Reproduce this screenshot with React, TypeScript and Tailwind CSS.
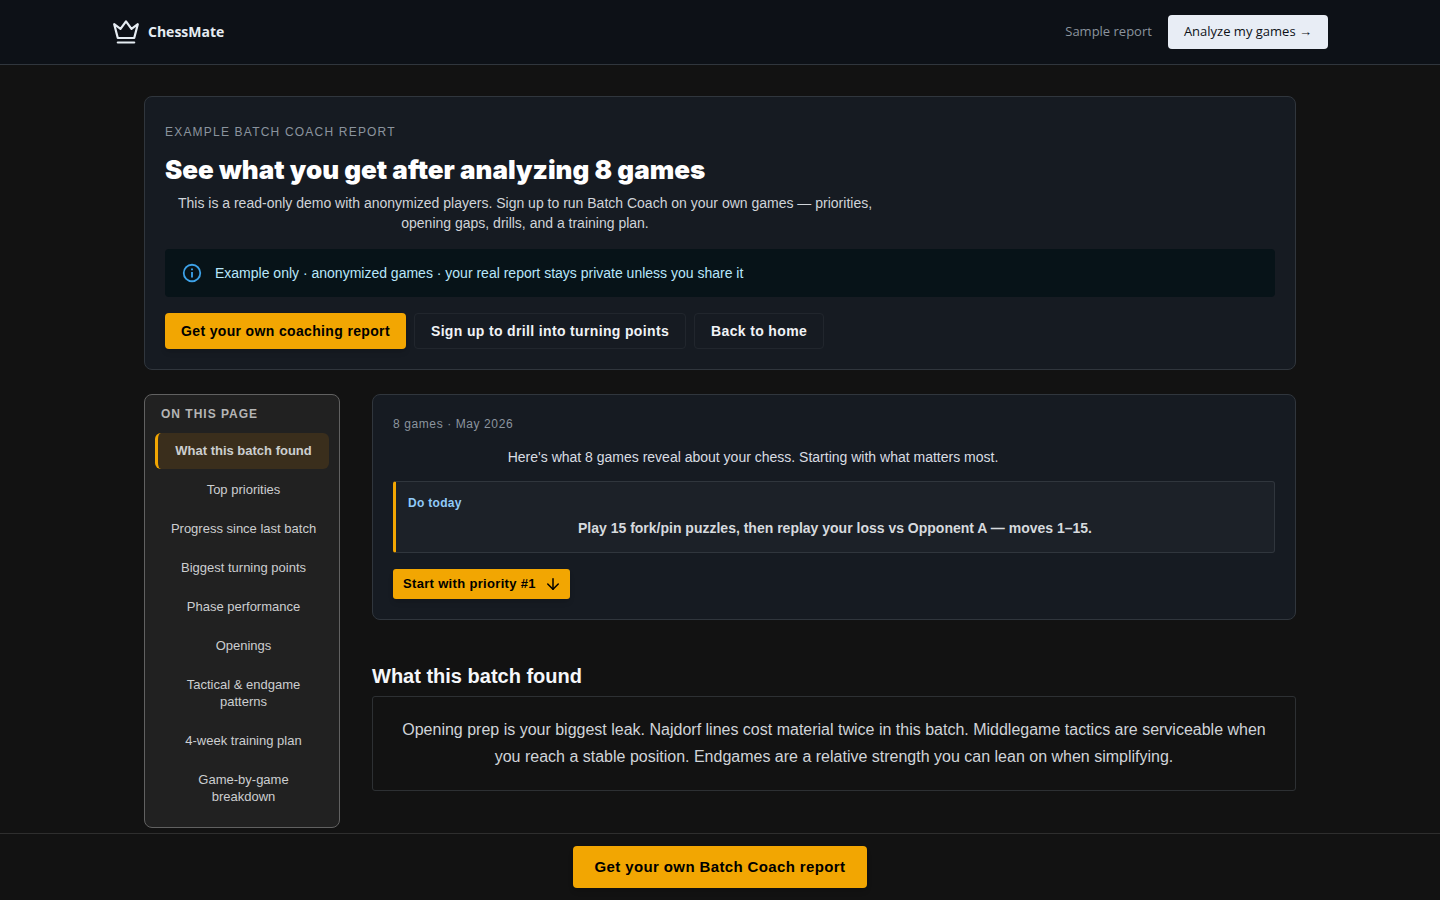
import { ArrowDown } from "lucide-react";

const sections = [
  { id: "found", label: "What this batch found" },
  { id: "priorities", label: "Top priorities" },
  { id: "progress", label: "Progress since last batch" },
  { id: "turning-points", label: "Biggest turning points" },
  { id: "phases", label: "Phase performance" },
  { id: "openings", label: "Openings" },
  { id: "patterns", label: "Tactical & endgame patterns" },
  { id: "plan", label: "4-week training plan" },
  { id: "games", label: "Game-by-game breakdown" },
];

function CrownLogo() {
  return (
    <svg
      className="w-7 h-7"
      viewBox="0 0 28 28"
      fill="none"
      stroke="currentColor"
      strokeWidth={2.2}
      strokeLinecap="round"
      strokeLinejoin="round"
      aria-hidden="true"
    >
      <path d="M2.2 6.2L5.8 20h16.400L25.800 6.200l-6.300 4.600L14 3.400l-5.500 7.400z" />
      <path d="M5.8 24.500h16.400" />
    </svg>
  );
}

function InfoIcon() {
  return (
    <svg className="w-[22px] h-[22px] text-[#3da2e8]" viewBox="0 0 24 24" fill="currentColor" aria-hidden="true">
      <path d="M11 9h2V7h-2m1 13c-4.410 0-8-3.590-8-8s3.590-8 8-8 8 3.590 8 8-3.590 8-8 8m0-18A10 10 0 0 0 2 12a10 10 0 0 0 10 10 10 10 0 0 0 10-10A10 10 0 0 0 12 2m-1 15h2v-6h-2v6Z" />
    </svg>
  );
}

function Header() {
  return (
    <header className="bg-[#0d1117] border-b border-[#30363d] font-['Open_Sans','Noto_Sans',sans-serif]">
      <div className="max-w-7xl mx-auto h-16 px-8 flex items-center justify-between">
        <a href="#home" className="flex items-center gap-2 text-[#e6edf3]">
          <CrownLogo />
          <span className="text-sm font-bold">ChessMate</span>
        </a>
        <nav className="flex items-center gap-4">
          <a href="#sample" className="text-[13px] text-[#8b949e]">
            Sample report
          </a>
          <a
            href="#analyze"
            className="h-[34px] px-4 flex items-center rounded bg-[#e8edf5] text-[13px] font-medium text-[#0d1117]"
          >
            Analyze my games →
          </a>
        </nav>
      </div>
    </header>
  );
}

function Hero() {
  return (
    <section className="bg-[#161b22] border border-[#30363d] rounded-lg p-5">
      <p className="text-xs leading-[30px] tracking-widest uppercase text-[#8b949e]">
        Example Batch Coach report
      </p>
      <h1 className="mt-2 text-[26px] leading-[30px] font-black text-white font-['Inter',sans-serif]">
        See what you get after analyzing 8 games
      </h1>
      <p className="mt-2 max-w-[720px] text-sm text-center text-[#d0d4d9]">
        This is a read-only demo with anonymized players. Sign up to run Batch Coach on your own games — priorities,
        opening gaps, drills, and a training plan.
      </p>
      <div
        role="note"
        className="mt-4 min-h-12 px-4 flex items-center gap-3 rounded bg-[#071318] text-sm text-[#b8e7fb]"
      >
        <InfoIcon />
        Example only · anonymized games · your real report stays private unless you share it
      </div>
      <div className="mt-4 flex flex-wrap gap-2 text-sm font-bold tracking-wide">
        <button className="h-9 px-4 rounded bg-[#f2a602] text-black shadow-md">Get your own coaching report</button>
        <button className="h-9 px-4 rounded border border-[#21262d] text-[#f0f3f6]">
          Sign up to drill into turning points
        </button>
        <button className="h-9 px-4 rounded border border-[#21262d] text-[#f0f3f6]">Back to home</button>
      </div>
    </section>
  );
}

function PageNav() {
  return (
    <nav
      aria-label="On this page"
      className="w-[196px] shrink-0 px-2.5 pt-[11px] pb-3 rounded-lg border border-[#616161] bg-[#212121]"
    >
      <h2 className="px-1.5 text-xs leading-4 font-bold tracking-[1px] uppercase text-[#b5b5b5]">On this page</h2>
      <ul className="mt-[11px] flex flex-col gap-[3px] text-[13px] leading-[17px] text-center text-[#ccced0]">
        {sections.map((s, i) => (
          <li key={s.id}>
            <a
              href={`#${s.id}`}
              className={
                i === 0
                  ? "block px-2 pt-[9px] pb-[10px] rounded-md border-l-3 border-[#f2a602] bg-[#3a2e1c] font-bold"
                  : "block px-2 pt-[9px] pb-[10px] border-l-3 border-transparent font-medium"
              }
            >
              {s.label}
            </a>
          </li>
        ))}
      </ul>
    </nav>
  );
}

function BatchSummary() {
  return (
    <section className="bg-[#161b22] border border-[#30363d] rounded-lg p-5">
      <p className="text-xs leading-[18px] tracking-wider text-[#8b949e]">8 games · May 2026</p>
      <p className="mt-3.5 max-w-[720px] text-sm text-center text-[#d9dde2]">
        Here's what 8 games reveal about your chess. Starting with what matters most.
      </p>
      <div className="mt-3.5 p-3 rounded-[3px] border border-l-3 border-[#30363d] border-l-[#f2a602] bg-[#1c2128]">
        <p className="text-xs leading-[18px] font-bold tracking-wide text-[#90caf9]">Do today</p>
        <p className="mt-1 text-sm leading-6 font-bold text-center text-[#d6dade]">
          Play 15 fork/pin puzzles, then replay your loss vs Opponent A — moves 1–15.
        </p>
      </div>
      <button className="mt-4 h-[30px] pl-2.5 pr-2 flex items-center gap-2 rounded-[3px] bg-[#f2a602] text-[13px] font-bold tracking-wide text-black shadow-md">
        Start with priority #1
        <ArrowDown className="w-[18px] h-[18px]" />
      </button>
    </section>
  );
}

export default function App() {
  return (
    <div className="min-h-screen bg-[#121212] font-['Liberation_Sans',Arial,sans-serif]">
      <Header />
      <main className="max-w-6xl mx-auto pt-[31px] pb-[72px]">
        <Hero />
        <div className="mt-6 flex items-start gap-8">
          <PageNav />
          <div className="flex-1 min-w-0">
            <BatchSummary />
            <section id="found" className="mt-[42px]">
              <h2 className="text-xl leading-7 font-bold text-[#f5f7fa]">What this batch found</h2>
              <div className="mt-1.5 px-5 pt-[19px] pb-5 rounded-[3px] border border-[#2d3033]">
                <p className="text-base leading-[27px] text-center text-[#d0d4d9]">
                  Opening prep is your biggest leak. Najdorf lines cost material twice in this batch. Middlegame
                  tactics are serviceable when you reach a stable position. Endgames are a relative strength you can
                  lean on when simplifying.
                </p>
              </div>
            </section>
          </div>
        </div>
      </main>
      <div className="fixed inset-x-0 bottom-0 py-3 flex justify-center border-t border-[#2e2e2e] bg-[#121212]">
        <button className="h-[42px] px-[22px] rounded bg-[#f2a602] text-[15px] font-bold tracking-wide text-black shadow-md">
          Get your own Batch Coach report
        </button>
      </div>
    </div>
  );
}
